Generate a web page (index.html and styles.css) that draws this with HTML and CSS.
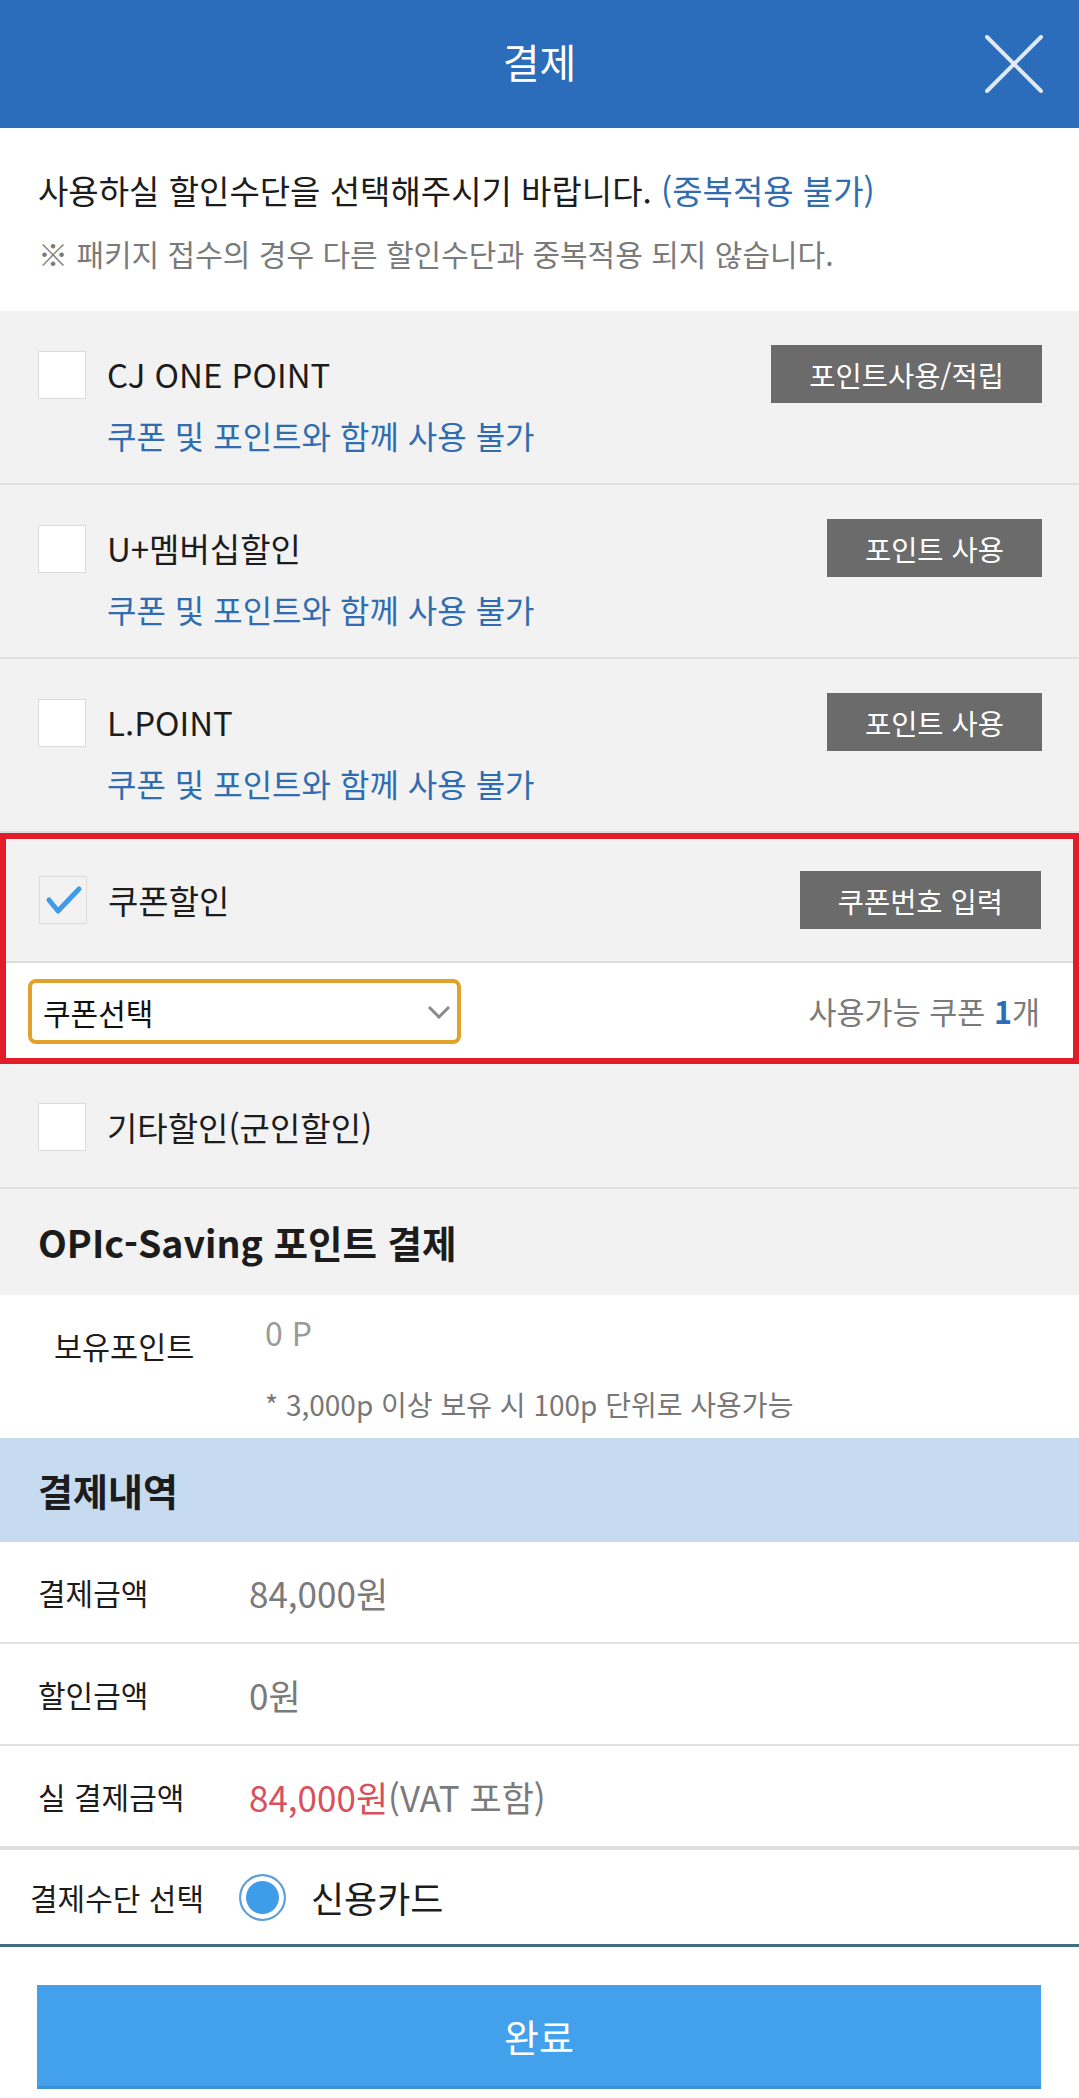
FILE: index.html
```html
<!DOCTYPE html>
<html lang="ko">

<head>
  <meta charset="UTF-8">
  <meta name="viewport" content="width=device-width, initial-scale=1.0">
  <title>결제</title>
  <link rel="stylesheet" href="styles.css">
</head>

<body>
  <header class="topbar">
    <span></span>
    <h1 class="topbar-title">결제</h1>
    <button class="close-btn" aria-label="닫기">
      <svg width="58" height="58" viewBox="0 0 58 58">
        <path d="M2 2 L56 56 M56 2 L2 56" stroke="#dfe9f6" stroke-width="4" stroke-linecap="round" fill="none"/>
      </svg>
    </button>
  </header>

  <div class="intro">
    <p class="intro-main">사용하실 할인수단을 선택해주시기 바랍니다. <span class="blue">(중복적용 불가)</span></p>
    <p class="intro-sub">※ 패키지 접수의 경우 다른 할인수단과 중복적용 되지 않습니다.</p>
  </div>

  <!-- 할인수단 -->
  <div class="discount-row">
    <span class="check"></span>
    <div class="row-text">
      <div class="row-title">CJ ONE POINT</div>
      <div class="row-note">쿠폰 및 포인트와 함께 사용 불가</div>
    </div>
    <button class="pill-btn">포인트사용/적립</button>
  </div>

  <div class="discount-row">
    <span class="check"></span>
    <div class="row-text">
      <div class="row-title">U+멤버십할인</div>
      <div class="row-note">쿠폰 및 포인트와 함께 사용 불가</div>
    </div>
    <button class="pill-btn">포인트 사용</button>
  </div>

  <div class="discount-row">
    <span class="check"></span>
    <div class="row-text">
      <div class="row-title">L.POINT</div>
      <div class="row-note">쿠폰 및 포인트와 함께 사용 불가</div>
    </div>
    <button class="pill-btn">포인트 사용</button>
  </div>

  <div class="coupon-box">
    <div class="coupon-row">
      <span class="check checked">
        <svg width="46" height="46" viewBox="0 0 46 46">
          <polyline points="9,23 18,34 39,12" stroke="#3d9be9" stroke-width="5" stroke-linecap="round" stroke-linejoin="round" fill="none"/>
        </svg>
      </span>
      <div class="row-title coupon-title">쿠폰할인</div>
      <button class="pill-btn">쿠폰번호 입력</button>
    </div>
    <div class="coupon-select-row">
      <div class="fake-select">
        <span>쿠폰선택</span>
        <svg width="24" height="14" viewBox="0 0 24 14">
          <polyline points="2,2 12,12 22,2" stroke="#8a8a8a" stroke-width="3" fill="none"/>
        </svg>
      </div>
      <div class="coupon-count">사용가능 쿠폰 <b>1</b>개</div>
    </div>
  </div>

  <div class="discount-row simple">
    <span class="check"></span>
    <div class="row-title">기타할인(군인할인)</div>
  </div>

  <h2 class="section-title">OPIc-Saving 포인트 결제</h2>

  <div class="points">
    <div class="points-label">보유포인트</div>
    <div class="points-value">
      <div class="points-amount">0 P</div>
      <div class="points-note">* 3,000p 이상 보유 시 100p 단위로 사용가능</div>
    </div>
  </div>

  <h2 class="summary-title">결제내역</h2>

  <div class="summary-row">
    <span class="summary-label">결제금액</span>
    <span class="summary-value">84,000원</span>
  </div>
  <div class="summary-row">
    <span class="summary-label">할인금액</span>
    <span class="summary-value">0원</span>
  </div>
  <div class="summary-row last">
    <span class="summary-label">실 결제금액</span>
    <span class="summary-value"><span class="red">84,000원</span>(VAT 포함)</span>
  </div>

  <div class="pay-method">
    <span class="pay-label">결제수단 선택</span>
    <span class="radio"></span>
    <span class="pay-option">신용카드</span>
  </div>

  <div class="done-wrap">
    <button class="done-btn">완료</button>
  </div>
</body>

</html>
```

FILE: styles.css
```css
body {
  margin: 0;
  padding: 0;
  width: 1079px;
  background-color: white;
  color: #1c1c1c;
  font-family: "Noto Sans CJK KR", "Noto Sans", sans-serif;
}

p,
h1,
h2 {
  margin: 0;
}

button {
  font-family: inherit;
  border: none;
  cursor: pointer;
}

.blue {
  color: #2f6db0;
}

.red {
  color: #d9505c;
}

/* 상단 바 */
.topbar {
  height: 128px;
  background-color: #2b6dbb;
  display: grid;
  grid-template-columns: 1fr auto 1fr;
  align-items: center;
}

.topbar-title {
  color: white;
  font-size: 40px;
  font-weight: 400;
  margin-top: -6px;
}

.close-btn {
  justify-self: end;
  background: none;
  padding: 0;
  margin-right: 36px;
  width: 58px;
  height: 58px;
}

.intro {
  padding: 40px 38px 38px;
}

.intro-main {
  font-size: 33px;
  line-height: 44px;
}

.intro-sub {
  margin-top: 21px;
  font-size: 30px;
  line-height: 40px;
  color: #7a7a7a;
}

/* 할인수단 목록 */
.discount-row {
  display: flex;
  align-items: flex-start;
  padding: 34px 37px 25px 38px;
  background-color: #f2f2f2;
  border-bottom: 2px solid #e0e0e0;
}

.check {
  flex: none;
  width: 48px;
  height: 48px;
  margin-top: 6px;
  margin-right: 21px;
  background-color: white;
  border: 1px solid #dcdcdc;
  box-sizing: border-box;
}

.check.checked {
  background-color: #f2f2f2;
  margin-top: 0;
}

.row-text {
  flex: 1;
}

.row-title {
  font-size: 33px;
  line-height: 58px;
}

.row-note {
  margin-top: 9px;
  font-size: 32px;
  line-height: 46px;
  color: #2f6db0;
}

.pill-btn {
  flex: none;
  height: 58px;
  padding: 0 38px;
  background-color: #6b6b6b;
  color: white;
  font-size: 28.5px;
}

.discount-row.simple {
  padding: 39px 38px 36px;
  align-items: center;
}

.discount-row.simple .check {
  margin-top: 0;
}

.discount-row.simple .row-title {
  line-height: 48px;
}

/* 쿠폰 (빨간 테두리 강조) */
.coupon-box {
  border: 6px solid #e31c2a;
}

.coupon-row {
  display: flex;
  align-items: center;
  height: 124px;
  padding: 0 32px 0 33px;
  box-sizing: border-box;
  background-color: #f2f2f2;
  border-bottom: 2px solid #dedede;
}

.coupon-title {
  flex: 1;
}

.coupon-select-row {
  display: flex;
  align-items: center;
  justify-content: space-between;
  height: 95px;
  padding: 0 33px 0 22px;
}

.fake-select {
  display: flex;
  align-items: center;
  justify-content: space-between;
  width: 433px;
  height: 65px;
  padding: 0 6px 0 11px;
  box-sizing: border-box;
  border: 4px solid #e2a12b;
  border-radius: 8px;
  font-size: 30px;
  color: #111;
  margin-top: 2px;
}

.coupon-count {
  font-size: 30.5px;
  color: #7a7a7a;
}

.coupon-count b {
  color: #2b6dbb;
}

/* OPIc-Saving */
.section-title {
  padding: 30px 38px;
  font-size: 37.5px;
  line-height: 46px;
  font-weight: 700;
  background-color: #f2f2f2;
}

.points {
  display: flex;
  align-items: flex-start;
  padding: 17px 38px 14px 54px;
}

.points-label {
  width: 211px;
  margin-top: 14px;
  font-size: 30.5px;
  line-height: 40px;
}

.points-amount {
  font-size: 32px;
  line-height: 40px;
  color: #9a9a9a;
}

.points-note {
  margin-top: 32px;
  font-size: 28px;
  line-height: 40px;
  color: #777;
}

/* 결제내역 */
.summary-title {
  height: 104px;
  padding: 0 38px;
  line-height: 104px;
  font-size: 38px;
  font-weight: 700;
  background-color: #c6daf0;
}

.summary-row {
  display: flex;
  align-items: center;
  height: 100px;
  padding: 0 38px;
  border-bottom: 2px solid #e2e2e2;
}

.summary-row.last {
  border-bottom: 4px solid #dedede;
}

.summary-label {
  width: 211px;
  font-size: 30px;
}

.summary-value {
  font-size: 35px;
  color: #7a7a7a;
}

.pay-method {
  display: flex;
  align-items: center;
  height: 94px;
  padding: 0 30px;
  border-bottom: 3px solid #3f6f7b;
}

.pay-label {
  font-size: 30px;
  margin-right: 35px;
}

.radio {
  width: 47px;
  height: 47px;
  box-sizing: border-box;
  border-radius: 50%;
  border: 2px solid #5d9fd6;
  background-color: #3f9ce9;
  box-shadow: inset 0 0 0 5px white;
  margin-right: 25px;
}

.pay-option {
  font-size: 36px;
}

.done-wrap {
  padding: 38px 38px 5px 37px;
}

.done-btn {
  display: block;
  width: 100%;
  height: 104px;
  background-color: #42a1ea;
  border-bottom: 3px solid #3b92d6;
  color: white;
  font-size: 38px;
}
```
